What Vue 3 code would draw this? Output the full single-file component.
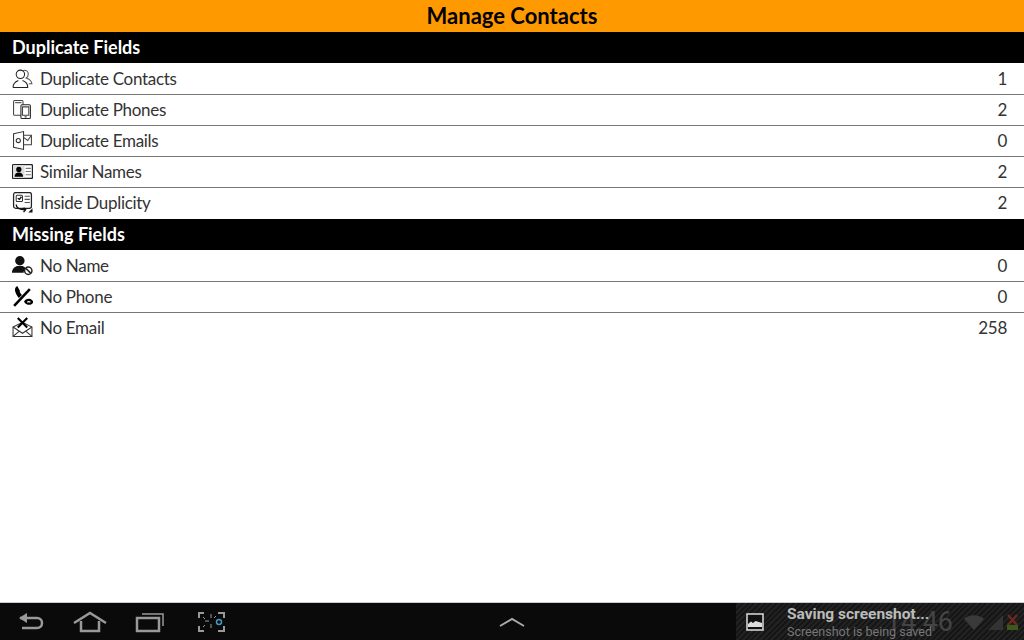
<script setup>
const sections = [
  {
    title: 'Duplicate Fields',
    rows: [
      { icon: 'contacts', label: 'Duplicate Contacts', count: 1 },
      { icon: 'phones', label: 'Duplicate Phones', count: 2 },
      { icon: 'emails', label: 'Duplicate Emails', count: 0 },
      { icon: 'names', label: 'Similar Names', count: 2 },
      { icon: 'inside', label: 'Inside Duplicity', count: 2 },
    ],
  },
  {
    title: 'Missing Fields',
    rows: [
      { icon: 'noname', label: 'No Name', count: 0 },
      { icon: 'nophone', label: 'No Phone', count: 0 },
      { icon: 'noemail', label: 'No Email', count: 258 },
    ],
  },
]
</script>

<template>
  <div class="screen">
    <header class="title-bar">Manage Contacts</header>

    <main class="content">
      <section v-for="section in sections" :key="section.title">
        <h2 class="section-title">{{ section.title }}</h2>
        <div v-for="row in section.rows" :key="row.label" class="row">
          <svg class="row-icon" viewBox="0 0 20 20" fill="none" stroke="#222" stroke-width="1">
            <template v-if="row.icon === 'contacts'">
              <circle cx="8" cy="6" r="4" />
              <path d="M1 18.500c0-4 2.500-5.500 5-6.500M10 12c3 1 5 2.500 5 6.500H1" />
              <path d="M10.500 2.500a3.500 3.500 0 0 1 5 3.500c0 2-1 3-2 3.500 2.500.8 5 2 5.500 5.500h-3" stroke="#555" />
            </template>
            <template v-else-if="row.icon === 'phones'">
              <rect x="1.500" y="1.500" width="9" height="14" rx="1" stroke="#444" />
              <path d="M3 3.500h6" stroke="#444" />
              <rect x="8.500" y="5.500" width="9" height="13" rx="1" fill="#fff" />
              <path d="M10 7.500h6v8h-6zM12 17h2" stroke="#444" />
            </template>
            <template v-else-if="row.icon === 'emails'">
              <path d="M1.500 3.500 11 1.500v17l-9.500-2z" stroke="#333" />
              <circle cx="6" cy="10" r="2" stroke="#333" />
              <path d="M11 5h7.500v9H11" stroke="#444" />
              <path d="m11 7 4 3 3.500-5" stroke="#444" />
            </template>
            <template v-else-if="row.icon === 'names'">
              <rect x="0.500" y="3.500" width="19" height="13" rx="1" stroke="#222" stroke-width="1.300" />
              <path d="M1 4h11v12H1z" fill="#ddd" stroke="none" />
              <circle cx="6.500" cy="8" r="2.500" fill="#000" stroke="none" />
              <path d="M2.500 15c0-3 2-4 4-4s4 1 4 4z" fill="#000" stroke="none" />
              <path d="M13 7h5M13 10h5M13 13h5" stroke="#777" />
            </template>
            <template v-else-if="row.icon === 'inside'">
              <rect x="1.500" y="0.500" width="17" height="15" rx="2" stroke="#222" stroke-width="1.200" />
              <rect x="4" y="3" width="6" height="6" rx="1" stroke="#333" />
              <path d="M5.500 6l1.500 1 2-2.500" stroke="#111" stroke-width="1.300" />
              <path d="M12 4h5M12 7h5M12 10h5" stroke="#555" />
              <path d="M4 12c0 4 4 5 9 5M11 15l2 2-2 2" stroke="#111" stroke-width="1.300" />
              <path d="m15.500 19.500 4-4v4z" fill="#111" stroke="none" />
            </template>
            <template v-else-if="row.icon === 'noname'">
              <circle cx="7.500" cy="5.500" r="4.500" fill="#111" stroke="none" />
              <path d="M0 17c0-4 3-6 5-6.500h5c1.500.5 2.500 1.500 3 2.500-1.500 1-2 2.500-1.800 4z" fill="#111" stroke="none" />
              <circle cx="15.500" cy="15" r="3.500" stroke-width="1.400" />
              <path d="m13 12.500 5 5" stroke-width="1.400" />
            </template>
            <template v-else-if="row.icon === 'nophone'">
              <path d="M5 0C3 1 2.500 3 3 5c.5 2 2 4.500 3.500 6.500L9.500 8.500C8.500 7 7 6.500 7.500 4.500z" fill="#000" stroke="none" />
              <path d="M11.500 15c.5-2.500 4.500-3.500 6.500-2.500 1.500.7 2.500 2.200 2 3.500-1 2.500-6.500 3-8.500-1z" fill="#000" stroke="none" />
              <path d="M14.500 15.500c1-.8 2-.8 3 0" stroke="#fff" />
              <path d="M2 19 17 3" stroke="#000" stroke-width="2.400" />
            </template>
            <template v-else>
              <path d="M1 9.500 10 5l9 4.500v9H1z" stroke="#333" />
              <path d="m1 9.500 9 6 9-6M1 18.500l6-5M19 18.500l-6-5" stroke="#333" />
              <path d="m5.500 1 9 9M14.500 1l-9 9" stroke="#000" stroke-width="2" />
            </template>
          </svg>
          <span class="row-label">{{ row.label }}</span>
          <span class="row-count">{{ row.count }}</span>
        </div>
      </section>
    </main>

    <footer class="nav-bar">
      <div class="nav-buttons">
        <svg width="28" height="20" viewBox="0 0 28 20" fill="none" stroke="#999" stroke-width="2.500">
          <path d="M3 6h17c3 0 5 2 5 5s-2 5-5 5H5" />
          <path d="M10 1 2 6l8 5" fill="#999" stroke="none" />
        </svg>
        <svg width="34" height="22" viewBox="0 0 34 22" fill="none" stroke="#999" stroke-width="2.500">
          <path d="M1 12 17 2l16 10M8 10v10h18V10" />
        </svg>
        <svg width="30" height="22" viewBox="0 0 30 22" fill="none" stroke="#999" stroke-width="2.500">
          <rect x="2" y="7" width="22" height="13" />
          <path d="M7 3h21v12" stroke-width="1.500" />
        </svg>
        <svg class="shot-icon" width="28" height="22" viewBox="0 0 28 22" fill="none" stroke="#999" stroke-width="2">
          <path d="M7 2H2v5M21 2h6v5M2 15v5h5M27 15v5h-6" />
          <path d="M14 3v4M14 13v4M8 10h4M6 6l2 2M8 14l-2 2M19 5l-2 2" stroke-width="1" />
          <circle cx="22" cy="11" r="2.500" stroke="#3d9ac0" stroke-width="1.500" />
        </svg>
      </div>
      <svg class="nav-up" width="26" height="10" viewBox="0 0 26 10" fill="none" stroke="#aaa" stroke-width="2">
        <path d="M1 9 13 2l12 7" />
      </svg>
      <div class="ticker">
        <svg class="ticker-icon" width="18" height="18" viewBox="0 0 18 18">
          <rect x="1" y="1" width="16" height="16" fill="#111" stroke="#ddd" stroke-width="1.500" />
          <path d="M2 14v-3l3-2.500 2 1.500 2.500-2 3.500 1 3 1v4z" fill="#ddd" />
        </svg>
        <div class="ticker-status">
          <span class="clock">14:46</span>
          <svg width="20" height="16" viewBox="0 0 20 16" fill="#3a3a3a">
            <path d="M0 5c5-5 15-5 20 0l-10 11z" />
          </svg>
          <svg width="15" height="16" viewBox="0 0 15 16" fill="#333">
            <path d="M0 16 15 1v15z" />
          </svg>
          <svg width="11" height="16" viewBox="0 0 11 16">
            <rect x="0" y="11" width="11" height="5" fill="#3c5a1e" />
            <path d="M1 1l9 10M10 1 1 11" stroke="#6a2a20" stroke-width="2.500" />
          </svg>
        </div>
        <div class="ticker-text">
          <div class="ticker-title">Saving screenshot...</div>
          <div class="ticker-sub">Screenshot is being saved</div>
        </div>
      </div>
    </footer>
  </div>
</template>

<style scoped>
.screen {
  width: 1024px;
  height: 640px;
  display: flex;
  flex-direction: column;
  overflow: hidden;
  background-color: #fff;
  font-family: 'Lato', 'Liberation Sans', sans-serif;
}

.title-bar {
  height: 32px;
  line-height: 32px;
  flex-shrink: 0;
  text-align: center;
  background-color: #ff9900;
  color: #000;
  font-size: 22px;
  font-weight: 700;
}

.content {
  flex: 1;
}

.section-title {
  margin: 0;
  height: 31px;
  line-height: 31px;
  padding-left: 12px;
  background-color: #000;
  color: #fff;
  font-size: 18px;
  font-weight: 700;
}

.row {
  height: 31px;
  box-sizing: border-box;
  display: flex;
  align-items: center;
  padding: 0 17px 2px 12px;
  border-bottom: 1px solid #777;
  color: #333;
  font-size: 17px;
  letter-spacing: -0.3px;
}

.section-title + .row {
  height: 32px;
  padding-bottom: 0;
}

.row:last-child {
  border-bottom: none;
}

.row-icon {
  width: 21px;
  height: 21px;
  margin-right: 7px;
  flex-shrink: 0;
}

.row-label {
  flex: 1;
}

.nav-bar {
  height: 38px;
  flex-shrink: 0;
  display: flex;
  align-items: center;
  position: relative;
  background-color: #0a0a0a;
  border-top: 1px solid #c8ccd8;
  box-sizing: border-box;
}

.nav-buttons {
  display: flex;
  align-items: center;
  gap: 28px;
  padding-left: 17px;
}

.shot-icon {
  margin-left: 4px;
}

.nav-up {
  position: absolute;
  left: 499px;
  top: 14px;
}

.ticker {
  position: absolute;
  left: 736px;
  right: 0;
  top: 0;
  bottom: 0;
  display: flex;
  align-items: center;
  background: repeating-linear-gradient(135deg, #161616 0 2px, #222 2px 4px);
}

.ticker-icon {
  margin-left: 10px;
}

.ticker-text {
  margin-left: 23px;
  position: relative;
}

.ticker-title {
  font-family: 'Roboto', sans-serif;
  font-size: 15.5px;
  font-weight: 700;
  line-height: 19px;
  color: #bbb;
}

.ticker-sub {
  font-family: 'Roboto', sans-serif;
  font-size: 12.500px;
  line-height: 15px;
  color: #777;
}

.ticker-status {
  position: absolute;
  right: 6px;
  top: 0;
  bottom: 0;
  display: flex;
  align-items: center;
  gap: 4px;
}

.clock {
  font-family: 'Roboto', sans-serif;
  font-size: 27px;
  color: #444;
  margin-right: 7px;
}
</style>
